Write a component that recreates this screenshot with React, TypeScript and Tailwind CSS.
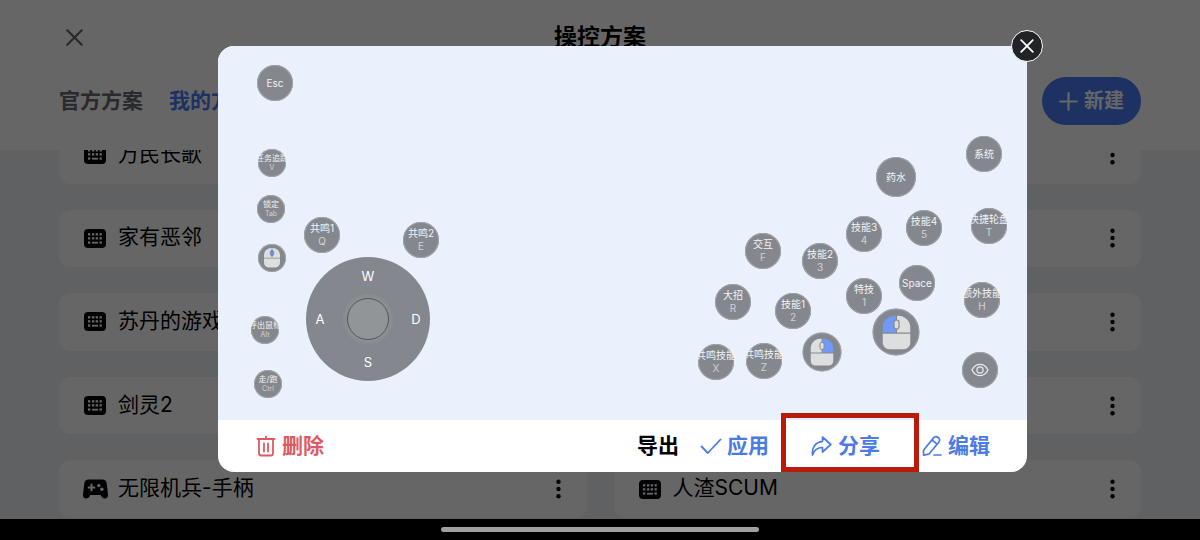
import { Fragment } from 'react'

interface Scheme {
  name: string
  device: 'keyboard' | 'gamepad'
}

interface KeyItem {
  x: number
  y: number
  size: 'sm' | 'md' | 'lg' | 'mouse' | 'xl'
  label?: string
  hint?: string
  icon?: 'wheel' | 'left' | 'right' | 'eye'
}

const schemes: Scheme[] = [
  { name: '万民长歌', device: 'keyboard' },
  { name: '逆水寒', device: 'keyboard' },
  { name: '家有恶邻', device: 'keyboard' },
  { name: '双人成行', device: 'gamepad' },
  { name: '苏丹的游戏', device: 'keyboard' },
  { name: '鸣潮', device: 'keyboard' },
  { name: '剑灵2', device: 'keyboard' },
  { name: '原神', device: 'keyboard' },
  { name: '无限机兵-手柄', device: 'gamepad' },
  { name: '人渣SCUM', device: 'keyboard' },
]

// x / y are the centre of each key on the preview canvas
const keys: KeyItem[] = [
  { x: 57, y: 37, size: 'md', label: 'Esc' },
  { x: 54, y: 117, size: 'sm', label: '任务追踪', hint: 'V' },
  { x: 53, y: 163, size: 'sm', label: '锁定', hint: 'Tab' },
  { x: 54, y: 212, size: 'sm', icon: 'wheel' },
  { x: 47, y: 284, size: 'sm', label: '呼出鼠标', hint: 'Alt' },
  { x: 50, y: 338, size: 'sm', label: '走/跑', hint: 'Ctrl' },
  { x: 104, y: 189, size: 'md', label: '共鸣1', hint: 'Q' },
  { x: 203, y: 194, size: 'md', label: '共鸣2', hint: 'E' },
  { x: 545, y: 205, size: 'md', label: '交互', hint: 'F' },
  { x: 602, y: 215, size: 'md', label: '技能2', hint: '3' },
  { x: 515, y: 256, size: 'md', label: '大招', hint: 'R' },
  { x: 575, y: 265, size: 'md', label: '技能1', hint: '2' },
  { x: 498, y: 316, size: 'md', label: '共鸣技能', hint: 'X' },
  { x: 546, y: 315, size: 'md', label: '共鸣技能', hint: 'Z' },
  { x: 646, y: 188, size: 'md', label: '技能3', hint: '4' },
  { x: 706, y: 182, size: 'md', label: '技能4', hint: '5' },
  { x: 646, y: 250, size: 'md', label: '特技', hint: '1' },
  { x: 699, y: 237, size: 'md', label: 'Space' },
  { x: 678, y: 131, size: 'lg', label: '药水' },
  { x: 766, y: 108, size: 'md', label: '系统' },
  { x: 771, y: 180, size: 'md', label: '快捷轮盘', hint: 'T' },
  { x: 764, y: 254, size: 'md', label: '额外技能', hint: 'H' },
  { x: 604, y: 306, size: 'mouse', icon: 'right' },
  { x: 678, y: 286, size: 'xl', icon: 'left' },
  { x: 762, y: 324, size: 'md', icon: 'eye' },
]

const sizeClass = {
  sm: 'size-7',
  md: 'size-9',
  lg: 'size-10',
  mouse: 'size-[39px]',
  xl: 'size-[47px]',
}

const mouseClass = {
  sm: 'w-4',
  md: 'w-5',
  lg: 'w-5',
  mouse: 'w-[23px]',
  xl: 'w-7',
}

function KeyboardIcon() {
  return (
    <svg viewBox="0 0 22 19" className="w-[22px] shrink-0" aria-hidden="true">
      <rect width="22" height="19" rx="4" fill="#05070d" />
      <g fill="#fff">
        {[4, 8, 11.7, 15.5].map((x) => (
          <Fragment key={x}>
            <rect x={x} y="4.2" width="2.3" height="2.3" />
            <rect x={x} y="8.2" width="2.3" height="2.3" />
          </Fragment>
        ))}
        <rect x="4" y="12.4" width="2.3" height="2.3" />
        <rect x="8" y="12.8" width="6" height="1.8" />
        <rect x="15.5" y="12.4" width="2.3" height="2.3" />
      </g>
    </svg>
  )
}

function GamepadIcon() {
  return (
    <svg viewBox="0 0 25 20" className="-mr-[2px] -ml-px w-[25px] shrink-0" aria-hidden="true">
      <path
        d="M5.500.5h14c2.400 0 3.900 1.500 4.200 4L25 15.500c.2 2.400-1.100 4-3.200 4-1.600 0-2.500-.8-3.300-2l-.9-1.500H7.400l-.9 1.500c-.8 1.200-1.700 2-3.300 2-2.100 0-3.400-1.600-3.200-4l1.300-11c.3-2.500 1.800-4 4.200-4z"
        fill="#05070d"
      />
      <path d="M4.800 8.500h7.400M8.500 4.800v7.400" stroke="#fff" strokeWidth="2" />
      <circle cx="15.800" cy="6.600" r="1.700" fill="#fff" />
      <circle cx="18.900" cy="10.300" r="1.700" fill="#fff" />
    </svg>
  )
}

function MouseIcon({ active, className }: { active: 'wheel' | 'left' | 'right'; className: string }) {
  const wheel = active === 'wheel'
  return (
    <svg viewBox="0 0 28 34" className={className} aria-hidden="true">
      <path d="M13.500 17V0C5.500 0 0 5.500 0 13v4z" fill={active === 'left' ? '#7099f8' : '#dddede'} />
      <path d="M14.500 17V0C22.500 0 28 5.500 28 13v4z" fill={active === 'right' ? '#7099f8' : '#dddede'} />
      {wheel && <path d="M13 0h2v17h-2z" fill="#dddede" />}
      <path d="M0 18.200h28V26c0 5-3.500 8-8 8H8c-4.500 0-8-3-8-8z" fill="#dddede" />
      {wheel && <path d="M14 2v14" stroke="#6f86b5" strokeWidth="1.500" />}
      <rect
        x={wheel ? 11 : 11.500}
        y="4.500"
        width={wheel ? 6 : 5}
        height="9"
        rx="2.500"
        fill={wheel ? '#6c8fdd' : '#dddede'}
        stroke={wheel ? '#7186b0' : '#84888e'}
        strokeWidth="1.200"
      />
    </svg>
  )
}

function EyeIcon() {
  return (
    <svg viewBox="0 0 18 14" className="w-[18px]" fill="none" stroke="#eceded" strokeWidth="1.200" aria-hidden="true">
      <path d="M1 7c1.800-3.600 4.600-5.600 8-5.600S15.200 3.400 17 7c-1.800 3.600-4.600 5.600-8 5.600S2.800 10.600 1 7z" />
      <circle cx="9" cy="7" r="3.100" />
    </svg>
  )
}

function MoreButton({ name }: { name: string }) {
  return (
    <button aria-label={`${name} 更多`} className="px-[2px] py-2">
      <svg viewBox="0 0 5 20" className="w-[5px]" fill="#000">
        <circle cx="2.500" cy="2.700" r="2.200" />
        <circle cx="2.500" cy="10" r="2.200" />
        <circle cx="2.500" cy="17.300" r="2.200" />
      </svg>
    </button>
  )
}

function PreviewKey({ item }: { item: KeyItem }) {
  const small = item.size === 'sm'
  return (
    <div
      className={`absolute flex -translate-x-1/2 -translate-y-1/2 flex-col items-center justify-center rounded-full bg-[#84888e] ring-1 ring-[#a0a4aa] ring-inset ${sizeClass[item.size]}`}
      style={{ left: item.x, top: item.y }}
    >
      {item.icon === 'eye' && <EyeIcon />}
      {item.icon && item.icon !== 'eye' && <MouseIcon active={item.icon} className={mouseClass[item.size]} />}
      {item.label && (
        <span
          className={`flex w-full justify-center overflow-hidden whitespace-nowrap text-[#f2f3f3] ${
            small ? 'text-[8px] leading-[10px]' : 'text-[10px] leading-[13px]'
          }`}
        >
          {item.label}
        </span>
      )}
      {item.hint && (
        <span className={`text-[#cfd1d3] ${small ? 'text-[7px] leading-[10px]' : 'text-[10px] leading-[13px]'}`}>
          {item.hint}
        </span>
      )}
    </div>
  )
}

function Joystick() {
  return (
    <div className="absolute top-[273px] left-[150px] grid size-[124px] -translate-x-1/2 -translate-y-1/2 grid-cols-[28px_68px_28px] grid-rows-[38px_48px_38px] place-items-center rounded-full bg-[#84888e] text-[13px] leading-4 text-white">
      <span className="col-start-2">W</span>
      <span className="col-start-1">A</span>
      <span className="flex size-[50px] items-center justify-center rounded-full bg-[#8a8d92]">
        <span className="size-[42px] rounded-full border border-[#55585c] bg-[#929598]" />
      </span>
      <span>D</span>
      <span className="col-start-2">S</span>
    </div>
  )
}

export default function App() {
  return (
    <div className="flex h-screen flex-col overflow-hidden bg-white font-['Inter','Noto_Sans_CJK_SC',sans-serif] text-black">
      {/* Page behind the dialog */}
      <div className="relative flex min-h-0 flex-1 flex-col bg-[#f0f3f8]">
        <header className="bg-white px-[59px]">
          <div className="grid h-[74px] grid-cols-[1fr_auto_1fr] items-center">
            <button aria-label="关闭" className="justify-self-start px-[7px]">
              <svg viewBox="0 0 17 17" className="w-[17px]" fill="none" stroke="#666a70" strokeWidth="2.200" strokeLinecap="round">
                <path d="M1.300 1.300l14.400 14.400M15.700 1.300L1.300 15.700" />
              </svg>
            </button>
            <h1 className="text-[23px] leading-8 font-bold">操控方案</h1>
          </div>
          <div className="flex h-[76px] items-center justify-between pb-[22px]">
            <nav className="flex gap-[26px] text-[21px] leading-8 font-bold">
              <a href="#official" className="text-[#666a70]">官方方案</a>
              <a href="#mine" className="text-[#4a7bf5]">我的方案</a>
            </nav>
            <button className="flex h-12 items-center gap-[6px] rounded-full bg-[#4a7bf5] px-[17px] text-[20px] leading-8 font-bold text-white">
              <svg viewBox="0 0 19 19" className="w-[19px]" stroke="currentColor" strokeWidth="2.200" strokeLinecap="round">
                <path d="M9.500 1.200v16.600M1.200 9.500h16.600" />
              </svg>
              新建
            </button>
          </div>
        </header>

        <main className="flex min-h-0 flex-1 overflow-hidden px-[59px]">
          <ul className="-mt-6 mb-px grid flex-1 auto-rows-fr grid-cols-2 gap-x-[27px] gap-y-[26px]">
            {schemes.map((scheme) => (
              <li key={scheme.name} className="flex items-center gap-3 rounded-xl bg-white pr-6 pl-[25px]">
                {scheme.device === 'keyboard' ? <KeyboardIcon /> : <GamepadIcon />}
                <span className="flex-1 pb-[2px] text-[21px] leading-8">{scheme.name}</span>
                <MoreButton name={scheme.name} />
              </li>
            ))}
          </ul>
        </main>

        {/* Backdrop + preview dialog */}
        <div className="absolute inset-0 bg-black/60 pt-[46px] pr-[173px] pl-[218px]">
          <section role="dialog" aria-label="方案预览" className="relative">
            <div className="overflow-hidden rounded-2xl bg-white">
              <div className="relative h-[374px] bg-[#eaf1fd]">
                {keys.map((item) => (
                  <PreviewKey key={`${item.x}-${item.y}`} item={item} />
                ))}
                <Joystick />
              </div>
              <footer className="flex h-[52px] items-center justify-between pr-[37px] pl-[38px] text-[21px] leading-8 font-bold text-[#4a7be6]">
                <button className="flex items-center gap-[6px] text-[#dc5a60]">
                  <svg viewBox="0 0 20 22" className="w-5" fill="none" stroke="currentColor" strokeWidth="1.800" strokeLinecap="round" strokeLinejoin="round">
                    <path d="M1.500 4h17M10 1.500V4M3 4.500v13.700c0 1.300.9 2.300 2.300 2.300h9.400c1.400 0 2.300-1 2.300-2.300V4.500M8 8.500v8M12 8.500v8" />
                  </svg>
                  删除
                </button>
                <div className="flex items-center gap-[42px]">
                  <div className="flex items-center gap-[21px]">
                    <button className="text-black">导出</button>
                    <button className="flex items-center gap-[5px]">
                      <svg viewBox="0 0 22 18" className="w-[22px]" fill="none" stroke="currentColor" strokeWidth="1.800" strokeLinecap="round" strokeLinejoin="round">
                        <path d="M1.500 9.500L7.800 16 20.500 2.500" />
                      </svg>
                      应用
                    </button>
                  </div>
                  <button className="relative flex items-center gap-[6px]">
                    <svg viewBox="0 0 21 22" className="w-[21px]" fill="none" stroke="currentColor" strokeWidth="1.700" strokeLinejoin="round">
                      <path d="M11.500 2l8.300 7.500-8.300 7.500v-4.500C7 12.300 3.500 14.500 1.500 20 .8 12 4.500 7 11.500 6.300z" />
                    </svg>
                    分享
                    <span className="absolute -top-[17px] -right-[39px] -bottom-[10px] -left-[30px] border-[5px] border-[#b81a0c]" />
                  </button>
                  <button className="flex items-center gap-[6px]">
                    <svg viewBox="0 0 20 22" className="w-5" fill="none" stroke="currentColor" strokeWidth="1.700" strokeLinecap="round" strokeLinejoin="round">
                      <path d="M1.500 15.200L11.600 2.900c1.200-1.400 3.200-1.600 4.700-.4s1.700 3.200.5 4.700L6.800 19.200l-5.200 1zM10 5l5.100 4.200M12 20h7" />
                    </svg>
                    编辑
                  </button>
                </div>
              </footer>
            </div>
            <button
              aria-label="关闭预览"
              className="absolute -top-4 -right-4 flex size-8 items-center justify-center rounded-full border border-white bg-[#222327]"
            >
              <svg viewBox="0 0 14 14" className="w-[14px]" stroke="#fff" strokeWidth="1.800" strokeLinecap="round">
                <path d="M1.200 1.200l11.600 11.600M12.800 1.200L1.200 12.800" />
              </svg>
            </button>
          </section>
        </div>
      </div>

      {/* System gesture bar */}
      <div className="flex h-[21px] shrink-0 items-center justify-center bg-black">
        <span className="h-[5px] w-[318px] rounded-full bg-[#a0a0a0]" />
      </div>
    </div>
  )
}
